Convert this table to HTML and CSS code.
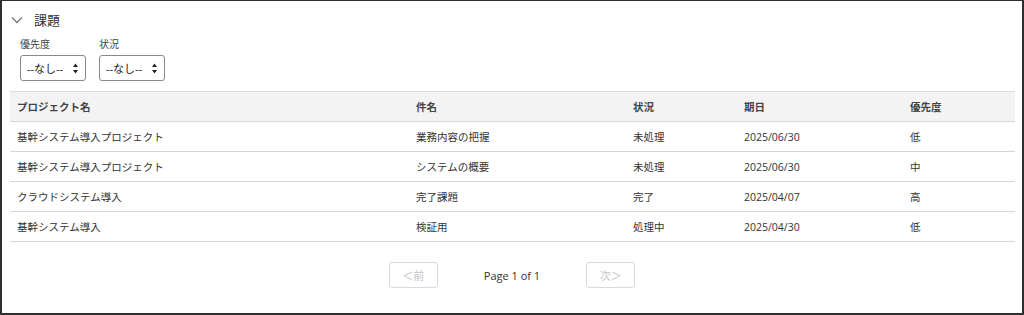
FILE: index.html
```html
<!DOCTYPE html>
<html lang="ja">
<head>
<meta charset="utf-8">
<link rel="stylesheet" href="styles.css">
</head>
<body>
<div class="frame">
  <div class="section-head">
    <svg class="chev" width="12" height="8" viewBox="0 0 12 8"><path d="M1 1.5 L6 6.5 L11 1.5" fill="none" stroke="#777" stroke-width="1.3"/></svg>
    <span class="title">課題</span>
  </div>
  <div class="filters">
    <div class="filter">
      <label class="flabel">優先度</label>
      <div class="select"><span>--なし--</span>
        <svg class="updown" width="5" height="11" viewBox="0 0 5 11"><path d="M2.5 0.5 L5 4 L0 4 Z M0 7 L5 7 L2.5 10.5 Z" fill="#222"/></svg>
      </div>
    </div>
    <div class="filter">
      <label class="flabel">状況</label>
      <div class="select"><span>--なし--</span>
        <svg class="updown" width="5" height="11" viewBox="0 0 5 11"><path d="M2.5 0.5 L5 4 L0 4 Z M0 7 L5 7 L2.5 10.5 Z" fill="#222"/></svg>
      </div>
    </div>
  </div>
  <table class="grid">
    <colgroup>
      <col class="c1"><col class="c2"><col class="c3"><col class="c4"><col class="c5">
    </colgroup>
    <thead>
      <tr><th>プロジェクト名</th><th>件名</th><th>状況</th><th>期日</th><th>優先度</th></tr>
    </thead>
    <tbody>
      <tr><td>基幹システム導入プロジェクト</td><td>業務内容の把握</td><td>未処理</td><td>2025/06/30</td><td>低</td></tr>
      <tr><td>基幹システム導入プロジェクト</td><td>システムの概要</td><td>未処理</td><td>2025/06/30</td><td>中</td></tr>
      <tr><td>クラウドシステム導入</td><td>完了課題</td><td>完了</td><td>2025/04/07</td><td>高</td></tr>
      <tr><td>基幹システム導入</td><td>検証用</td><td>処理中</td><td>2025/04/30</td><td>低</td></tr>
    </tbody>
  </table>
  <div class="pager">
    <button class="pbtn" disabled>＜前</button>
    <span class="pinfo">Page 1 of 1</span>
    <button class="pbtn" disabled>次＞</button>
  </div>
</div>
</body>
</html>
```
FILE: styles.css
```css
html, body {
  margin: 0;
  padding: 0;
  background: #fff;
}
body {
  font-family: "Open Sans", "Noto Sans CJK JP", sans-serif;
  color: #333;
  font-size: 10.5px;
}
.frame {
  box-sizing: border-box;
  width: 1024px;
  height: 315px;
  border: 2px solid #2e2e2e;
  border-top-width: 1px;
  padding: 0 8px 0 8px;
}
.section-head {
  display: flex;
  align-items: center;
  height: 36px;
  padding-left: 1px;
}
.chev {
  margin-top: 1px;
}
.title {
  font-size: 13px;
  margin-left: 11px;
  color: #333;
}
.filters {
  display: flex;
  gap: 13px;
  padding-left: 10px;
}
.filter {
  display: flex;
  flex-direction: column;
}
.flabel {
  font-size: 10px;
  color: #444;
  line-height: 14px;
  margin-bottom: 4px;
}
.select {
  box-sizing: border-box;
  width: 66px;
  height: 26px;
  border: 1px solid #8a8a8a;
  border-radius: 3px;
  display: flex;
  align-items: center;
  justify-content: space-between;
  padding: 0 7px 0 6px;
  font-size: 11px;
  color: #222;
}
.grid {
  border-collapse: collapse;
  table-layout: fixed;
  width: 1005px;
  margin-top: 10px;
}
.c1 { width: 399px; }
.c2 { width: 217px; }
.c3 { width: 111px; }
.c4 { width: 166px; }
.c5 { width: 112px; }
.grid th, .grid td {
  text-align: left;
  padding: 0 7px;
  height: 29px;
  border-bottom: 1px solid #d6d6d6;
  white-space: nowrap;
}
.grid th {
  background: #f3f3f3;
  font-weight: bold;
  color: #444;
  border-top: 1px solid #dcdcdc;
}
.grid td {
  color: #333;
}
.pager {
  display: flex;
  justify-content: center;
  align-items: center;
  gap: 46px;
  margin-top: 20px;
}
.pbtn {
  box-sizing: border-box;
  width: 49px;
  height: 26px;
  border: 1px solid #dadada;
  border-radius: 3px;
  background: #fff;
  color: #c4c4c4;
  font-family: "Open Sans", "Noto Sans CJK JP", sans-serif;
  font-size: 11px;
  padding: 0;
}
.pinfo {
  font-size: 11px;
  color: #333;
}
```
